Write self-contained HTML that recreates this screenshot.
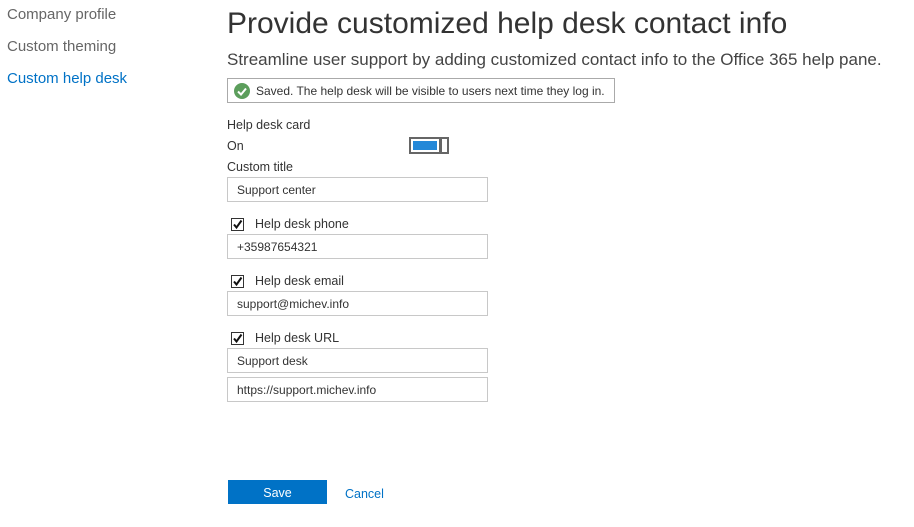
<!DOCTYPE html>
<html><head><style>
body{margin:0;width:914px;height:527px;background:#fff;font-family:"Segoe UI","Liberation Sans",sans-serif;color:#333;position:relative;overflow:hidden}
.a{position:absolute;white-space:nowrap}
.nav{font-size:15px;color:#666;left:7px}
.lbl{font-size:12.5px;color:#333}
.inp{position:absolute;left:227px;font-size:12px;line-height:25px;padding-left:9px;box-sizing:border-box;width:261px;height:25px;color:#333;border:1px solid #c8c8c8}
.cb{position:absolute;left:231px;width:11px;height:11px;border:1px solid #333}
.cb svg{position:absolute;left:0;top:0}
</style></head><body>
<div class="a nav" style="top:6px">Company profile</div>
<div class="a nav" style="top:38px">Custom theming</div>
<div class="a nav" style="top:70px;color:#0072c6">Custom help desk</div>
<div class="a" style="left:227px;top:7px;font-size:30px;color:#333">Provide customized help desk contact info</div>
<div class="a" style="left:227px;top:50px;font-size:17px;color:#444">Streamline user support by adding customized contact info to the Office 365 help pane.</div>
<div style="position:absolute;left:227px;top:78px;width:388px;height:25px;border:1px solid #aaa;box-sizing:border-box"></div>
<svg class="a" style="left:233px;top:82px" width="18" height="18"><circle cx="9" cy="9" r="8" fill="#5c9e5c"/><path d="M5 9.5l3 3 5-6" stroke="#fff" stroke-width="2" fill="none"/></svg>
<div class="a" style="left:256px;top:84px;font-size:12px">Saved. The help desk will be visible to users next time they log in.</div>
<div class="a lbl" style="left:227px;top:118px">Help desk card</div>
<div class="a lbl" style="left:227px;top:139px">On</div>
<div style="position:absolute;left:409px;top:137px;width:32px;height:17px;border:2px solid #666;box-sizing:border-box"><div style="margin:2px;height:9px;background:#2488d8"></div></div>
<div style="position:absolute;left:440px;top:137px;width:9px;height:17px;border:2px solid #666;box-sizing:border-box"></div>
<div class="a lbl" style="left:227px;top:160px">Custom title</div>
<div class="inp" style="top:177px">Support center</div>
<div class="cb" style="top:218px"><svg width="11" height="11"><path d="M2 5.5l2.5 3L9.5 1.5" stroke="#111" stroke-width="2" fill="none"/></svg></div>
<div class="a lbl" style="left:255px;top:217px">Help desk phone</div>
<div class="inp" style="top:234px">+35987654321</div>
<div class="cb" style="top:275px"><svg width="11" height="11"><path d="M2 5.5l2.5 3L9.5 1.5" stroke="#111" stroke-width="2" fill="none"/></svg></div>
<div class="a lbl" style="left:255px;top:274px">Help desk email</div>
<div class="inp" style="top:291px">support@michev.info</div>
<div class="cb" style="top:332px"><svg width="11" height="11"><path d="M2 5.5l2.5 3L9.5 1.5" stroke="#111" stroke-width="2" fill="none"/></svg></div>
<div class="a lbl" style="left:255px;top:331px">Help desk URL</div>
<div class="inp" style="top:348px">Support desk</div>
<div class="inp" style="top:377px">https://support.michev.info</div>
<div style="position:absolute;left:228px;top:480px;width:99px;height:24px;background:#0072c6;color:#fff;font-size:12.5px;text-align:center;line-height:26px">Save</div>
<div class="a" style="left:345px;top:487px;font-size:12.5px;color:#0072c6">Cancel</div>
</body></html>
